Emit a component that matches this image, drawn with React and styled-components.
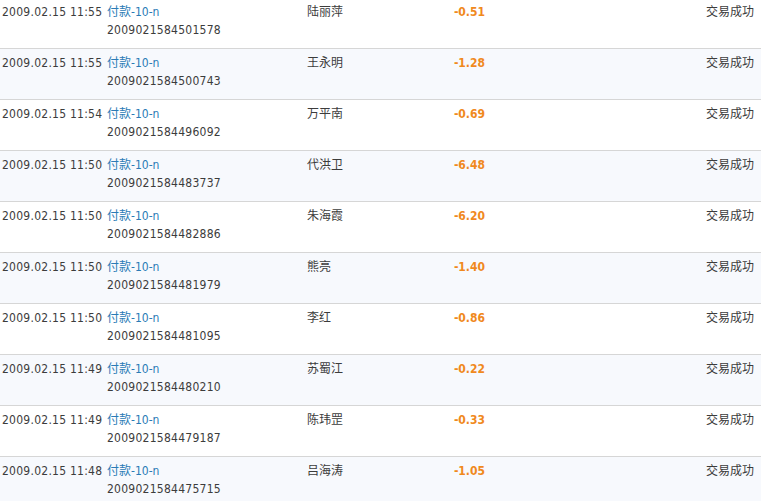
import React from "react";
import styled, { createGlobalStyle } from "styled-components";

const GlobalStyle = createGlobalStyle`
  html, body {
    margin: 0;
    padding: 0;
    background: #ffffff;
    overflow: hidden;
  }
  body {
    font-family: "DejaVu Sans Condensed", "DejaVu Sans", "Noto Sans CJK SC", sans-serif;
    font-size: 12px;
    color: #3c3c3c;
  }
`;

const records = [
  { time: "2009.02.15 11:55", no: "2009021584501578", name: "陆丽萍", amount: "-0.51" },
  { time: "2009.02.15 11:55", no: "2009021584500743", name: "王永明", amount: "-1.28" },
  { time: "2009.02.15 11:54", no: "2009021584496092", name: "万平南", amount: "-0.69" },
  { time: "2009.02.15 11:50", no: "2009021584483737", name: "代洪卫", amount: "-6.48" },
  { time: "2009.02.15 11:50", no: "2009021584482886", name: "朱海霞", amount: "-6.20" },
  { time: "2009.02.15 11:50", no: "2009021584481979", name: "熊亮", amount: "-1.40" },
  { time: "2009.02.15 11:50", no: "2009021584481095", name: "李红", amount: "-0.86" },
  { time: "2009.02.15 11:49", no: "2009021584480210", name: "苏蜀江", amount: "-0.22" },
  { time: "2009.02.15 11:49", no: "2009021584479187", name: "陈玮罡", amount: "-0.33" },
  { time: "2009.02.15 11:48", no: "2009021584475715", name: "吕海涛", amount: "-1.05" },
];

const List = styled.div`
  margin-top: -2px;
  width: 761px;
`;

const Row = styled.div`
  display: grid;
  grid-template-columns: 107px 200px 100px 78px 1fr;
  height: 51px;
  box-sizing: border-box;
  padding-top: 5px;
  line-height: 18px;
  background: ${(p) => (p.$alt ? "#f7f9fd" : "#ffffff")};
  border-bottom: 1px solid #d6d6d6;
`;

const Cell = styled.div`
  white-space: nowrap;
  padding-left: ${(p) => p.$pl || 0}px;
  padding-right: ${(p) => p.$pr || 0}px;
  text-align: ${(p) => (p.$right ? "right" : "left")};
  letter-spacing: ${(p) => (p.$num ? "0.25px" : "0")};
`;

const Link = styled.a`
  display: block;
  color: #2a7bb6;
  text-decoration: none;
  letter-spacing: 0;
`;

const Amount = styled(Cell)`
  color: #f0891d;
  font-weight: bold;
`;

export default function App() {
  return (
    <>
      <GlobalStyle />
      <List>
        {records.map((r, i) => (
          <Row key={r.no} $alt={i % 2 === 1}>
            <Cell $pl={2} $num>{r.time}</Cell>
            <Cell $num>
              <Link href="#">付款-10-n</Link>
              <div>{r.no}</div>
            </Cell>
            <Cell>{r.name}</Cell>
            <Amount $right>{r.amount}</Amount>
            <Cell $right $pr={7}>交易成功</Cell>
          </Row>
        ))}
      </List>
    </>
  );
}
